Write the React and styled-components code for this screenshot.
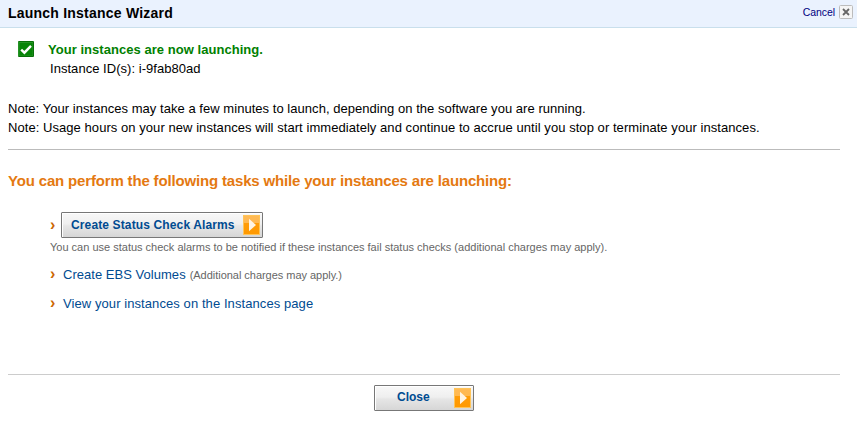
import React from "react";
import styled, { createGlobalStyle } from "styled-components";

const GlobalStyle = createGlobalStyle`
  *, *::before, *::after { box-sizing: border-box; }
  body { margin: 0; background: #fff; }
`;

const Wizard = styled.main`
  width: 857px;
  height: 426px;
  overflow: hidden;
  background: #fff;
  color: #000;
  font-family: "Liberation Sans", Arial, sans-serif;
  font-size: 13px;
  line-height: 19px;
  letter-spacing: 0.04px;
  white-space: nowrap;
`;

const TitleBar = styled.header`
  display: flex;
  align-items: center;
  justify-content: space-between;
  height: 28px;
  padding: 0 4px 2px 8px;
  background: #eaf2fe;
  border-bottom: 1px solid #c9dfec;
`;

const Title = styled.h1`
  margin: 0;
  padding-top: 2px;
  font-size: 14px;
  font-weight: bold;
  letter-spacing: 0.22px;
`;

const Cancel = styled.a`
  display: flex;
  align-items: center;
  gap: 4px;
  color: #000080;
  font-size: 10.5px;
  letter-spacing: -0.08px;
`;

const CloseSvg = styled.svg`
  display: block;
  margin-top: -1px;
`;

const Body = styled.div`
  width: 840px;
  padding: 12px 0 0 8px;
`;

const Status = styled.section`
  display: flex;
  gap: 14px;
  height: 59px;
  padding-left: 10px;
`;

const StatusIcon = styled.svg`
  display: block;
  margin-top: 1px;
`;

const StatusTitle = styled.div`
  color: #008000;
  font-weight: bold;
`;

const InstanceId = styled.div`
  padding-left: 2px;
`;

const Note = styled.p`
  margin: 0;
  letter-spacing: ${(p) => p.$tracking}px;
`;

const Rule = styled.hr`
  height: 1px;
  margin: 0;
  border: 0;
  background: ${(p) => p.$color};
`;

const Notes = styled.section`
  height: 50px;
`;

const Heading = styled.h2`
  margin: 21px 0 0;
  color: #e47911;
  font-size: 15px;
  font-weight: bold;
  letter-spacing: -0.165px;
  line-height: 20px;
`;

const Tasks = styled.ul`
  display: flex;
  flex-direction: column;
  height: 183px;
  margin: 0;
  padding: 21px 0 0 42px;
  list-style: none;
`;

const Task = styled.li`
  display: flex;
  align-items: center;
  height: ${(p) => p.$height}px;
`;

const Marker = styled.span`
  width: ${(p) => p.$width}px;
  padding-bottom: 2px;
  color: #cc6600;
  font-size: 16px;
  font-weight: bold;
`;

const TaskLink = styled.a`
  color: #004b91;
  letter-spacing: ${(p) => p.$tracking}px;
`;

const Hint = styled.span`
  color: #666;
  font-size: 11px;
  line-height: 18px;
  letter-spacing: ${(p) => (p.$indent ? -0.03 : 0)}px;
  padding-left: ${(p) => p.$indent || 0}px;
  padding-top: ${(p) => (p.$indent ? 1 : 0)}px;
`;

const Button = styled.button`
  display: flex;
  align-items: center;
  justify-content: space-between;
  width: ${(p) => p.$width}px;
  height: 26px;
  padding: 0 2px 0 ${(p) => p.$pad}px;
  border: 1px solid #777;
  border-radius: 1px;
  background: linear-gradient(#f8f8f8 0%, #efefef 46%, #e6e6e6 54%, #d6d6d6 100%);
  box-shadow: inset 1px 1px 0 #fff;
  color: #004b91;
  font: bold 12px/22px "Liberation Sans", Arial, sans-serif;
  letter-spacing: ${(p) => p.$tracking || 0}px;
`;

const ButtonLabel = styled.span`
  padding-bottom: ${(p) => p.$lift}px;
`;

const Footer = styled.footer`
  display: flex;
  justify-content: center;
  padding-top: 10px;
`;

const Arrow = () => (
  <svg width="17" height="20" viewBox="0 0 17 20" aria-hidden="true">
    <defs>
      <linearGradient id="orange" x1="0" y1="0" x2="0" y2="1">
        <stop offset="0" stopColor="#ffba55" />
        <stop offset="0.39" stopColor="#ffb850" />
        <stop offset="0.4" stopColor="#ff9c08" />
        <stop offset="1" stopColor="#ff9900" />
      </linearGradient>
    </defs>
    <rect width="17" height="20" fill="#ffc458" />
    <rect x="1" y="1" width="15" height="18" fill="url(#orange)" />
    <path d="M6 3.8v12.4l7-6.2z" fill="#fff4e4" />
  </svg>
);

const Check = () => (
  <StatusIcon width="16" height="16" viewBox="0 0 16 16" aria-hidden="true">
    <rect width="16" height="16" rx="1" fill="#087008" />
    <path d="M0 1h15v14H0z" fill="#259325" />
    <rect x="1.5" y="2" width="13" height="12.5" fill="#078407" />
    <path d="M3.2 8.6l3.2 3.1 6.6-6.8" fill="none" stroke="#fff" strokeWidth="2.4" />
  </StatusIcon>
);

const CloseBox = () => (
  <CloseSvg width="14" height="14" viewBox="0 0 14 14" aria-hidden="true">
    <rect x="0.5" y="0.5" width="13" height="13" rx="1" fill="#f5f5f5" stroke="#bcbcbc" />
    <path d="M4 4l6 6M10 4l-6 6" stroke="#666" strokeWidth="1.8" />
  </CloseSvg>
);

export default function App() {
  return (
    <>
      <GlobalStyle />
      <Wizard>
        <TitleBar>
          <Title>Launch Instance Wizard</Title>
          <Cancel>
            Cancel
            <CloseBox />
          </Cancel>
        </TitleBar>
        <Body>
          <Status>
            <Check />
            <div>
              <StatusTitle>Your instances are now launching.</StatusTitle>
              <InstanceId>Instance ID(s): i-9fab80ad</InstanceId>
            </div>
          </Status>
          <Notes>
            <Note $tracking={0.04}>Note: Your instances may take a few minutes to launch, depending on the software you are running.</Note>
            <Note $tracking={0.057}>Note: Usage hours on your new instances will start immediately and continue to accrue until you stop or terminate your instances.</Note>
          </Notes>
          <Rule $color="#bbb" />
          <Heading>You can perform the following tasks while your instances are launching:</Heading>
          <Tasks>
            <Task $height={26}>
              <Marker $width={11}>›</Marker>
              <Button $width={202} $pad={9} $tracking={0.13}>
                <ButtonLabel $lift={0}>Create Status Check Alarms</ButtonLabel>
                <Arrow />
              </Button>
            </Task>
            <Task $height={18}>
              <Hint>You can use status check alarms to be notified if these instances fail status checks (additional charges may apply).</Hint>
            </Task>
            <Task $height={36}>
              <Marker $width={13}>›</Marker>
              <TaskLink $tracking={0.03}>Create EBS Volumes</TaskLink>
              <Hint $indent={4}>(Additional charges may apply.)</Hint>
            </Task>
            <Task $height={22}>
              <Marker $width={13}>›</Marker>
              <TaskLink $tracking={0.08}>View your instances on the Instances page</TaskLink>
            </Task>
          </Tasks>
          <Rule $color="#ccc" />
          <Footer>
            <Button $width={100} $pad={22}>
              <ButtonLabel $lift={2}>Close</ButtonLabel>
              <Arrow />
            </Button>
          </Footer>
        </Body>
      </Wizard>
    </>
  );
}
